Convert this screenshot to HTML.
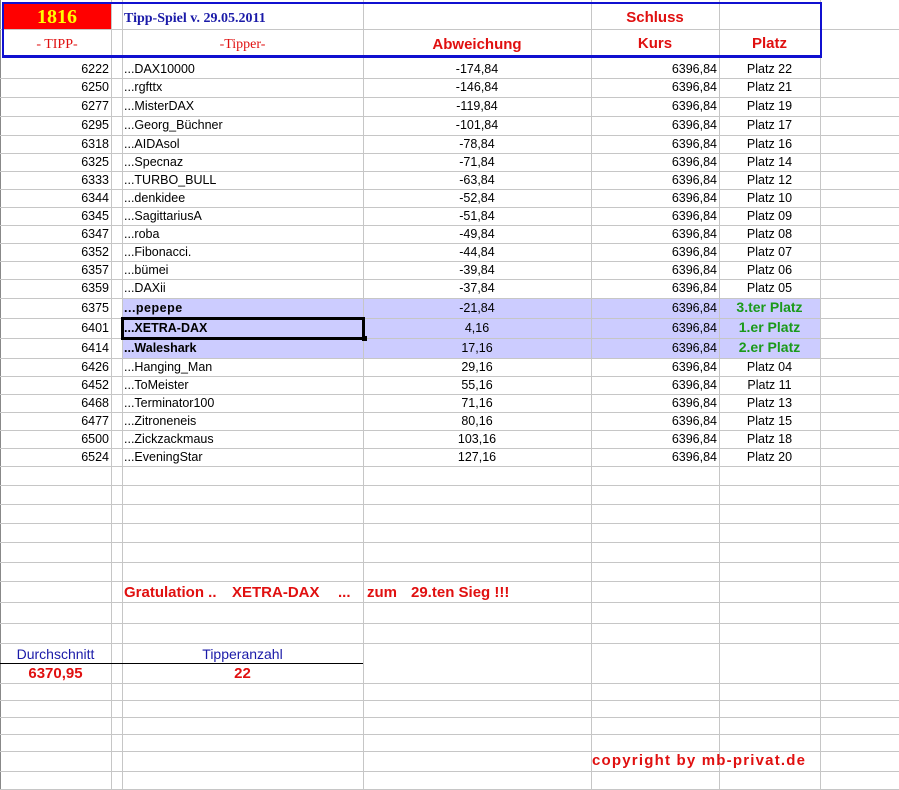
<!DOCTYPE html>
<html><head><meta charset="utf-8"><style>
body{margin:0;width:899px;height:790px;background:#fff;position:relative;overflow:hidden;font-family:"Liberation Sans",Arial,sans-serif;font-size:12.5px;color:#000}
div{position:absolute}
.h{left:0;width:899px;height:1px;background:#c6c6c6}
.v{top:0;width:1px;height:790px;background:#c6c6c6}
.a{left:0;width:109px;text-align:right}
.c{left:124px;width:235px}
.d{left:363px;width:228px;text-align:center}
.e{left:591px;width:126px;text-align:right}
.f{left:719px;width:101px;text-align:center}
.b{font-weight:bold}
.g{color:#1a9a1a;font-weight:bold;font-size:14px}
.r{color:#e01010;font-weight:bold}
.gr{top:582px;line-height:21px;font-size:15px;color:#e01010;font-weight:bold;white-space:pre}
</style></head><body>
<div style="left:122px;top:298px;width:698px;height:60px;background:#ccccff"></div>
<div class="v" style="left:0;background:#888"></div>
<div class="v" style="left:111px"></div>
<div class="v" style="left:122px"></div>
<div class="v" style="left:363px"></div>
<div class="v" style="left:591px"></div>
<div class="v" style="left:719px"></div>
<div class="v" style="left:820px"></div>
<div class="h" style="top:29px"></div>
<div class="h" style="top:78px"></div><div class="h" style="top:97px"></div><div class="h" style="top:116px"></div><div class="h" style="top:135px"></div><div class="h" style="top:153px"></div><div class="h" style="top:171px"></div><div class="h" style="top:189px"></div><div class="h" style="top:207px"></div><div class="h" style="top:225px"></div><div class="h" style="top:243px"></div><div class="h" style="top:261px"></div><div class="h" style="top:279px"></div><div class="h" style="top:298px"></div><div class="h" style="top:318px"></div><div class="h" style="top:338px"></div><div class="h" style="top:358px"></div><div class="h" style="top:376px"></div><div class="h" style="top:394px"></div><div class="h" style="top:412px"></div><div class="h" style="top:430px"></div><div class="h" style="top:448px"></div><div class="h" style="top:466px"></div><div class="h" style="top:485px"></div><div class="h" style="top:504px"></div><div class="h" style="top:523px"></div><div class="h" style="top:542px"></div><div class="h" style="top:562px"></div><div class="h" style="top:581px"></div><div class="h" style="top:602px"></div><div class="h" style="top:623px"></div><div class="h" style="top:643px"></div><div class="h" style="top:683px"></div><div class="h" style="top:700px"></div><div class="h" style="top:717px"></div><div class="h" style="top:734px"></div><div class="h" style="top:751px"></div><div class="h" style="top:771px"></div><div class="h" style="top:789px"></div>
<div style="left:0;top:663px;width:363px;height:1px;background:#000"></div>
<!-- header -->
<div style="left:3px;top:3px;width:108px;height:26px;background:#ff0000"></div>
<div style="left:2px;top:2px;width:816px;height:51px;border:2px solid #1010d0;border-bottom:3px solid #1010d0"></div>
<div style="left:3px;top:4px;width:108px;height:26px;line-height:26px;text-align:center;color:#ffff00;font-family:'Liberation Serif',serif;font-weight:bold;font-size:20px">1816</div>
<div style="left:124px;top:6px;height:26px;line-height:26px;color:#1a1aa8;font-family:'Liberation Serif',serif;font-weight:bold;font-size:14px">Tipp-Spiel v. 29.05.2011</div>
<div style="left:591px;top:5px;width:128px;height:26px;line-height:26px;text-align:center;color:#e01010;font-weight:bold;font-size:15px">Schluss</div>
<div style="left:3px;top:32px;width:108px;height:26px;line-height:26px;text-align:center;color:#e01010;font-family:'Liberation Serif',serif;font-size:14px">- TIPP-</div>
<div style="left:122px;top:32px;width:241px;height:26px;line-height:26px;text-align:center;color:#e01010;font-family:'Liberation Serif',serif;font-size:14px">-Tipper-</div>
<div style="left:363px;top:32px;width:228px;height:26px;line-height:26px;text-align:center;color:#e01010;font-weight:bold;font-size:15px">Abweichung</div>
<div style="left:591px;top:31px;width:128px;height:26px;line-height:26px;text-align:center;color:#e01010;font-weight:bold;font-size:15px">Kurs</div>
<div style="left:719px;top:31px;width:101px;height:26px;line-height:26px;text-align:center;color:#e01010;font-weight:bold;font-size:15px">Platz</div>
<!-- rows -->
<div class="a" style="top:60px;line-height:18px">6222</div><div class="c" style="top:60px;line-height:18px">...DAX10000</div><div class="d" style="top:60px;line-height:18px">-174,84</div><div class="e" style="top:60px;line-height:18px">6396,84</div><div class="f" style="top:60px;line-height:18px">Platz 22</div>
<div class="a" style="top:78px;line-height:19px">6250</div><div class="c" style="top:78px;line-height:19px">...rgfttx</div><div class="d" style="top:78px;line-height:19px">-146,84</div><div class="e" style="top:78px;line-height:19px">6396,84</div><div class="f" style="top:78px;line-height:19px">Platz 21</div>
<div class="a" style="top:97px;line-height:19px">6277</div><div class="c" style="top:97px;line-height:19px">...MisterDAX</div><div class="d" style="top:97px;line-height:19px">-119,84</div><div class="e" style="top:97px;line-height:19px">6396,84</div><div class="f" style="top:97px;line-height:19px">Platz 19</div>
<div class="a" style="top:116px;line-height:19px">6295</div><div class="c" style="top:116px;line-height:19px">...Georg_Büchner</div><div class="d" style="top:116px;line-height:19px">-101,84</div><div class="e" style="top:116px;line-height:19px">6396,84</div><div class="f" style="top:116px;line-height:19px">Platz 17</div>
<div class="a" style="top:135px;line-height:18px">6318</div><div class="c" style="top:135px;line-height:18px">...AIDAsol</div><div class="d" style="top:135px;line-height:18px">-78,84</div><div class="e" style="top:135px;line-height:18px">6396,84</div><div class="f" style="top:135px;line-height:18px">Platz 16</div>
<div class="a" style="top:153px;line-height:18px">6325</div><div class="c" style="top:153px;line-height:18px">...Specnaz</div><div class="d" style="top:153px;line-height:18px">-71,84</div><div class="e" style="top:153px;line-height:18px">6396,84</div><div class="f" style="top:153px;line-height:18px">Platz 14</div>
<div class="a" style="top:171px;line-height:18px">6333</div><div class="c" style="top:171px;line-height:18px">...TURBO_BULL</div><div class="d" style="top:171px;line-height:18px">-63,84</div><div class="e" style="top:171px;line-height:18px">6396,84</div><div class="f" style="top:171px;line-height:18px">Platz 12</div>
<div class="a" style="top:189px;line-height:18px">6344</div><div class="c" style="top:189px;line-height:18px">...denkidee</div><div class="d" style="top:189px;line-height:18px">-52,84</div><div class="e" style="top:189px;line-height:18px">6396,84</div><div class="f" style="top:189px;line-height:18px">Platz 10</div>
<div class="a" style="top:207px;line-height:18px">6345</div><div class="c" style="top:207px;line-height:18px">...SagittariusA</div><div class="d" style="top:207px;line-height:18px">-51,84</div><div class="e" style="top:207px;line-height:18px">6396,84</div><div class="f" style="top:207px;line-height:18px">Platz 09</div>
<div class="a" style="top:225px;line-height:18px">6347</div><div class="c" style="top:225px;line-height:18px">...roba</div><div class="d" style="top:225px;line-height:18px">-49,84</div><div class="e" style="top:225px;line-height:18px">6396,84</div><div class="f" style="top:225px;line-height:18px">Platz 08</div>
<div class="a" style="top:243px;line-height:18px">6352</div><div class="c" style="top:243px;line-height:18px">...Fibonacci.</div><div class="d" style="top:243px;line-height:18px">-44,84</div><div class="e" style="top:243px;line-height:18px">6396,84</div><div class="f" style="top:243px;line-height:18px">Platz 07</div>
<div class="a" style="top:261px;line-height:18px">6357</div><div class="c" style="top:261px;line-height:18px">...bümei</div><div class="d" style="top:261px;line-height:18px">-39,84</div><div class="e" style="top:261px;line-height:18px">6396,84</div><div class="f" style="top:261px;line-height:18px">Platz 06</div>
<div class="a" style="top:279px;line-height:19px">6359</div><div class="c" style="top:279px;line-height:19px">...DAXii</div><div class="d" style="top:279px;line-height:19px">-37,84</div><div class="e" style="top:279px;line-height:19px">6396,84</div><div class="f" style="top:279px;line-height:19px">Platz 05</div>
<div class="a" style="top:298px;line-height:20px">6375</div><div class="c b" style="top:298px;line-height:20px;letter-spacing:0.5px">...pepepe</div><div class="d" style="top:298px;line-height:20px">-21,84</div><div class="e" style="top:298px;line-height:20px">6396,84</div><div class="f g" style="top:297px;line-height:20px">3.ter Platz</div>
<div class="a" style="top:318px;line-height:20px">6401</div><div class="c b" style="top:318px;line-height:20px">...XETRA-DAX</div><div class="d" style="top:318px;line-height:20px">4,16</div><div class="e" style="top:318px;line-height:20px">6396,84</div><div class="f g" style="top:317px;line-height:20px">1.er Platz</div>
<div class="a" style="top:338px;line-height:20px">6414</div><div class="c b" style="top:338px;line-height:20px">...Waleshark</div><div class="d" style="top:338px;line-height:20px">17,16</div><div class="e" style="top:338px;line-height:20px">6396,84</div><div class="f g" style="top:337px;line-height:20px">2.er Platz</div>
<div class="a" style="top:358px;line-height:18px">6426</div><div class="c" style="top:358px;line-height:18px">...Hanging_Man</div><div class="d" style="top:358px;line-height:18px">29,16</div><div class="e" style="top:358px;line-height:18px">6396,84</div><div class="f" style="top:358px;line-height:18px">Platz 04</div>
<div class="a" style="top:376px;line-height:18px">6452</div><div class="c" style="top:376px;line-height:18px">...ToMeister</div><div class="d" style="top:376px;line-height:18px">55,16</div><div class="e" style="top:376px;line-height:18px">6396,84</div><div class="f" style="top:376px;line-height:18px">Platz 11</div>
<div class="a" style="top:394px;line-height:18px">6468</div><div class="c" style="top:394px;line-height:18px">...Terminator100</div><div class="d" style="top:394px;line-height:18px">71,16</div><div class="e" style="top:394px;line-height:18px">6396,84</div><div class="f" style="top:394px;line-height:18px">Platz 13</div>
<div class="a" style="top:412px;line-height:18px">6477</div><div class="c" style="top:412px;line-height:18px">...Zitroneneis</div><div class="d" style="top:412px;line-height:18px">80,16</div><div class="e" style="top:412px;line-height:18px">6396,84</div><div class="f" style="top:412px;line-height:18px">Platz 15</div>
<div class="a" style="top:430px;line-height:18px">6500</div><div class="c" style="top:430px;line-height:18px">...Zickzackmaus</div><div class="d" style="top:430px;line-height:18px">103,16</div><div class="e" style="top:430px;line-height:18px">6396,84</div><div class="f" style="top:430px;line-height:18px">Platz 18</div>
<div class="a" style="top:448px;line-height:18px">6524</div><div class="c" style="top:448px;line-height:18px">...EveningStar</div><div class="d" style="top:448px;line-height:18px">127,16</div><div class="e" style="top:448px;line-height:18px">6396,84</div><div class="f" style="top:448px;line-height:18px">Platz 20</div>
<!-- selection -->
<div style="left:121px;top:317px;width:238px;height:17px;border:3px solid #000"></div>
<div style="left:362px;top:336px;width:5px;height:5px;background:#000"></div>
<!-- footer -->
<div class="gr" style="left:124px">Gratulation ..</div>
<div class="gr" style="left:232px">XETRA-DAX</div>
<div class="gr" style="left:338px">...</div>
<div class="gr" style="left:367px">zum</div>
<div class="gr" style="left:411px">29.ten Sieg !!!</div>
<div style="left:0;top:645px;width:111px;line-height:19px;text-align:center;color:#1a1aa8;font-size:14px">Durchschnitt</div>
<div style="left:122px;top:645px;width:241px;line-height:19px;text-align:center;color:#1a1aa8;font-size:14px">Tipperanzahl</div>
<div class="r" style="left:0;top:664px;width:111px;line-height:19px;text-align:center;font-size:15px">6370,95</div>
<div class="r" style="left:122px;top:664px;width:241px;line-height:19px;text-align:center;font-size:15px">22</div>
<div class="r" style="left:592px;top:751px;line-height:20px;font-size:15px;letter-spacing:1.2px">copyright by mb-privat.de</div>
</body></html>
